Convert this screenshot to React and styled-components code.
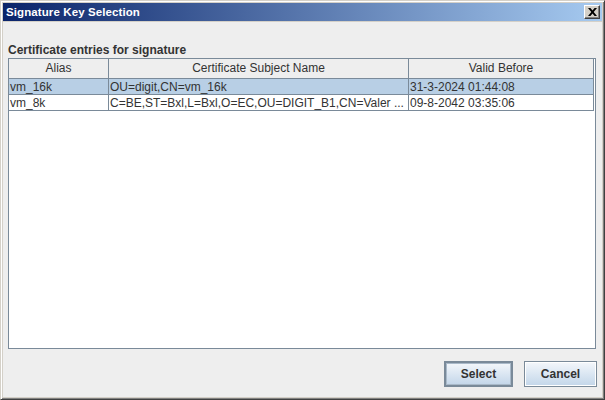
import React from 'react'
import styled, { createGlobalStyle } from 'styled-components'

const rows = [
  { alias: 'vm_16k', subject: 'OU=digit,CN=vm_16k', valid: '31-3-2024 01:44:08', selected: true },
  { alias: 'vm_8k', subject: 'C=BE,ST=Bxl,L=Bxl,O=EC,OU=DIGIT_B1,CN=Valer ...', valid: '09-8-2042 03:35:06' },
]

const columns = ['Alias', 'Certificate Subject Name', 'Valid Before']

function App() {
  return (
    <Frame>
      <Global />
      <TitleBar>
        <TitleText>Signature Key Selection</TitleText>
        <CloseButton>
          <svg width="9" height="8" viewBox="0 0 9 8">
            <path d="M0 0h2.4l2.1 2.6L6.6 0H9L5.7 4 9 8H6.6L4.5 5.4 2.4 8H0l3.3-4z" fill="#000" />
          </svg>
        </CloseButton>
      </TitleBar>
      <Content>
        <Caption>Certificate entries for signature</Caption>
        <ScrollPane>
          <Grid>
            {columns.map((c) => (
              <HeadCell key={c}>{c}</HeadCell>
            ))}
            {rows.map((r) => (
              <React.Fragment key={r.alias}>
                <Cell $selected={r.selected}>{r.alias}</Cell>
                <Cell $selected={r.selected}>{r.subject}</Cell>
                <Cell $selected={r.selected}>{r.valid}</Cell>
              </React.Fragment>
            ))}
          </Grid>
        </ScrollPane>
        <ButtonBar>
          <Button $primary $width={69}>Select</Button>
          <Button $width={73}>Cancel</Button>
        </ButtonBar>
      </Content>
    </Frame>
  )
}

const Global = createGlobalStyle`
body{
  margin: 0;
  font-family: "Liberation Sans", Arial, sans-serif;
}
`

const Frame = styled.div`
width: 605px;
height: 400px;
box-sizing: border-box;
display: flex;
flex-direction: column;
background: #d4d0c8;
border-style: solid;
border-width: 1px;
border-color: #d4d0c8 #404040 #404040 #d4d0c8;
box-shadow: inset 1px 1px #ffffff, inset -1px -1px #808080;
padding: 2px;
`

const TitleBar = styled.div`
height: 18px;
margin-bottom: 1px;
display: flex;
align-items: center;
justify-content: space-between;
background: linear-gradient(to right, #0a246a, #a6caf0);
padding: 0 2px 0 3px;
`

const TitleText = styled.span`
color: #ffffff;
font-weight: bold;
font-size: 11.5px;
letter-spacing: 0.1px;
`

const CloseButton = styled.div`
width: 16px;
height: 14px;
box-sizing: border-box;
display: flex;
align-items: center;
justify-content: center;
background: #d4d0c8;
border-style: solid;
border-width: 1px;
border-color: #ffffff #404040 #404040 #ffffff;
box-shadow: inset -1px -1px #808080;
`

const Content = styled.div`
flex: 1;
display: flex;
flex-direction: column;
background: #eeeeee;
padding: 21px 0 0 5px;
color: #333333;
font-size: 12px;
`

const Caption = styled.div`
font-weight: bold;
line-height: 15px;
color: #333333;
`

const ScrollPane = styled.div`
width: 588px;
height: 291px;
box-sizing: border-box;
border: 1px solid #7a8a99;
background: #ffffff;
padding-right: 1px;
`

const Grid = styled.div`
display: grid;
grid-template-columns: 100px 300px 185px;
`

const HeadCell = styled.div`
height: 20px;
box-sizing: border-box;
border-right: 1px solid #7a8a99;
border-bottom: 1px solid #7a8a99;
background: #eeeeee;
text-align: center;
line-height: 19px;
color: #333333;
white-space: nowrap;
overflow: hidden;
`

const Cell = styled.div`
height: 16px;
box-sizing: border-box;
border-right: 1px solid #7a8a99;
border-bottom: 1px solid #7a8a99;
background: ${(p) => (p.$selected ? '#b8cfe5' : '#ffffff')};
padding-left: 1px;
line-height: 16px;
color: #333333;
white-space: nowrap;
overflow: hidden;
`

const ButtonBar = styled.div`
display: flex;
justify-content: flex-end;
gap: 11px;
margin-top: 12px;
padding-right: 5px;
`

const Button = styled.button`
width: ${(p) => p.$width}px;
height: 26px;
box-sizing: border-box;
padding: 0;
font-family: "Liberation Sans", Arial, sans-serif;
font-size: 12px;
font-weight: bold;
color: #333333;
background: linear-gradient(#f4f7fb, #dde8f3 45%, #c3d6e9);
border: ${(p) => (p.$primary ? '2px solid #7a8a99' : '1px solid #7a8a99')};
box-shadow: ${(p) => (p.$primary ? 'inset 0 0 0 1px #a9b9c9' : 'inset 0 0 0 1px #ffffff')};
cursor: pointer;
`

export default App
